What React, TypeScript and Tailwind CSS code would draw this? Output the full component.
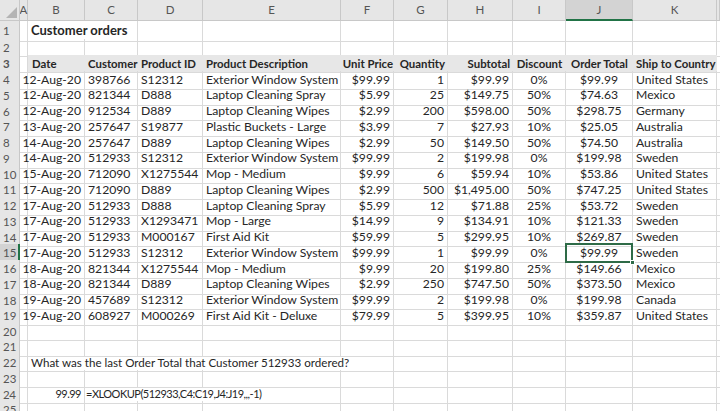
import React from "react";

const GRID =
  "grid grid-cols-[20px_8px_57px_53px_65px_138px_53px_54px_65px_53px_67px_84px_1fr]";

const rows = [
  ["12-Aug-20", "398766", "S12312", "Exterior Window System", "$99.99", "1", "$99.99", "0%", "$99.99", "United States"],
  ["12-Aug-20", "821344", "D888", "Laptop Cleaning Spray", "$5.99", "25", "$149.75", "50%", "$74.63", "Mexico"],
  ["12-Aug-20", "912534", "D889", "Laptop Cleaning Wipes", "$2.99", "200", "$598.00", "50%", "$298.75", "Germany"],
  ["13-Aug-20", "257647", "S19877", "Plastic Buckets - Large", "$3.99", "7", "$27.93", "10%", "$25.05", "Australia"],
  ["14-Aug-20", "257647", "D889", "Laptop Cleaning Wipes", "$2.99", "50", "$149.50", "50%", "$74.50", "Australia"],
  ["14-Aug-20", "512933", "S12312", "Exterior Window System", "$99.99", "2", "$199.98", "0%", "$199.98", "Sweden"],
  ["15-Aug-20", "712090", "X1275544", "Mop - Medium", "$9.99", "6", "$59.94", "10%", "$53.86", "United States"],
  ["17-Aug-20", "712090", "D889", "Laptop Cleaning Wipes", "$2.99", "500", "$1,495.00", "50%", "$747.25", "United States"],
  ["17-Aug-20", "512933", "D888", "Laptop Cleaning Spray", "$5.99", "12", "$71.88", "25%", "$53.72", "Sweden"],
  ["17-Aug-20", "512933", "X1293471", "Mop - Large", "$14.99", "9", "$134.91", "10%", "$121.33", "Sweden"],
  ["17-Aug-20", "512933", "M000167", "First Aid Kit", "$59.99", "5", "$299.95", "10%", "$269.87", "Sweden"],
  ["17-Aug-20", "512933", "S12312", "Exterior Window System", "$99.99", "1", "$99.99", "0%", "$99.99", "Sweden"],
  ["18-Aug-20", "821344", "X1275544", "Mop - Medium", "$9.99", "20", "$199.80", "25%", "$149.66", "Mexico"],
  ["18-Aug-20", "821344", "D889", "Laptop Cleaning Wipes", "$2.99", "250", "$747.50", "50%", "$373.50", "Mexico"],
  ["19-Aug-20", "457689", "S12312", "Exterior Window System", "$99.99", "2", "$199.98", "0%", "$199.98", "Canada"],
  ["19-Aug-20", "608927", "M000269", "First Aid Kit - Deluxe", "$79.99", "5", "$399.95", "10%", "$359.87", "United States"],
];

// B..K alignment for data rows
const align = ["r", "l", "l", "l", "r", "r", "r", "c", "c", "l"];

const alignCls: Record<string, string> = {
  l: "justify-start pl-[3px]",
  r: "justify-end pr-[3px]",
  c: "justify-center",
};

function Cell({
  children,
  a = "l",
  className = "",
}: {
  children?: React.ReactNode;
  a?: string;
  className?: string;
}) {
  return (
    <div
      className={`flex items-center whitespace-nowrap overflow-visible border-r border-b border-[#dadada] ${alignCls[a]} ${className}`}
    >
      {children}
    </div>
  );
}

function RowNum({ n, selected }: { n: number; selected?: boolean }) {
  return (
    <div
      className={`flex items-center pl-[3px] text-[11.5px] text-[#555] border-b border-[#c8c8c8] ${
        selected
          ? "bg-[#d3d3d3] border-r-2 border-r-[#217346]"
          : "bg-[#e6e6e6] border-r border-r-[#c8c8c8]"
      }`}
    >
      {n}
    </div>
  );
}

function Blank({ n }: { n: number }) {
  return (
    <>
      {Array.from({ length: n }).map((_, i) => (
        <Cell key={i} />
      ))}
    </>
  );
}

export default function App() {
  const letters = ["A", "B", "C", "D", "E", "F", "G", "H", "I", "J", "K", ""];

  return (
    <div
      className="w-[720px] h-[411px] overflow-hidden bg-white text-[#262626] text-[12.2px]"
      style={{ fontFamily: "Lato, 'Liberation Sans', sans-serif" }}
    >
      {/* column headers */}
      <div className={`${GRID} h-[21px]`}>
        <div className="relative bg-[#e6e6e6] border-r border-b border-[#c8c8c8]">
          <svg className="absolute right-[2px] bottom-[2px]" width="11" height="11" viewBox="0 0 11 11">
            <polygon points="11,0 11,11 0,11" fill="#b4b4b4" />
          </svg>
        </div>
        {letters.map((l, i) => (
          <div
            key={i}
            className={`flex items-center justify-center text-[11.5px] text-[#555] border-r border-[#c8c8c8] ${
              l === "J"
                ? "bg-[#d3d3d3] border-b-2 border-b-[#217346]"
                : "bg-[#e6e6e6] border-b border-b-[#c8c8c8]"
            }`}
          >
            {l}
          </div>
        ))}
      </div>

      {/* row 1 */}
      <div className={`${GRID} h-[18px]`}>
        <RowNum n={1} />
        <Cell />
        <Cell className="col-span-2 font-bold text-[13px]">Customer orders</Cell>
        <Blank n={9} />
      </div>

      {/* row 2 */}
      <div className={`${GRID} h-[15.75px]`}>
        <RowNum n={2} />
        <Blank n={12} />
      </div>

      {/* row 3 headers */}
      <div className={`${GRID} h-[15.75px] font-bold text-[11.4px]`}>
        <RowNum n={3} />
        <Cell />
        <div className="col-span-10 grid grid-cols-[57px_53px_65px_138px_53px_54px_65px_53px_67px_84px] bg-[#e7e7e7] border-b border-[#dadada] whitespace-nowrap">
          <div className="flex items-center pl-[4px]">Date</div>
          <div className="flex items-center pl-[3px]">Customer</div>
          <div className="flex items-center pl-[3px]">Product ID</div>
          <div className="flex items-center pl-[3px]">Product Description</div>
          <div className="flex items-center justify-end pr-[1px]">Unit Price</div>
          <div className="flex items-center justify-end pr-[3px]">Quantity</div>
          <div className="flex items-center justify-end pr-[3px]">Subtotal</div>
          <div className="flex items-center justify-center">Discount</div>
          <div className="flex items-center justify-center">Order Total</div>
          <div className="flex items-center pl-[3px]">Ship to Country</div>
        </div>
        <Cell />
      </div>

      {/* data rows */}
      {rows.map((r, i) => {
        const n = i + 4;
        return (
          <div key={n} className={`${GRID} h-[15.75px]`}>
            <RowNum n={n} selected={n === 15} />
            <Cell />
            {r.map((v, j) =>
              n === 15 && j === 8 ? (
                <div key={j} className="relative flex items-center justify-center border-b border-r border-[#dadada]">
                  <div className="absolute -left-[1px] -top-[1px] -right-[1px] -bottom-[1px] border-2 border-[#2e6b47]" />
                  <div className="absolute -right-[3px] -bottom-[3px] w-[5px] h-[5px] bg-[#2e6b47] border border-white" />
                  {v}
                </div>
              ) : (
                <Cell key={j} a={align[j]}>
                  {v}
                </Cell>
              )
            )}
            <Cell />
          </div>
        );
      })}

      {/* rows 20, 21 */}
      {[20, 21].map((n) => (
        <div key={n} className={`${GRID} h-[15.75px]`}>
          <RowNum n={n} />
          <Blank n={12} />
        </div>
      ))}

      {/* row 22 */}
      <div className={`${GRID} h-[15.75px]`}>
        <RowNum n={22} />
        <Cell />
        <Cell className="col-span-5 text-[11.6px]">What was the last Order Total that Customer 512933 ordered?</Cell>
        <Blank n={6} />
      </div>

      {/* row 23 */}
      <div className={`${GRID} h-[15.75px]`}>
        <RowNum n={23} />
        <Blank n={12} />
      </div>

      {/* row 24 */}
      <div className={`${GRID} h-[15.75px] text-[11px] tracking-[-0.5px]`}>
        <RowNum n={24} />
        <Cell />
        <Cell a="r">99.99</Cell>
        <Cell className="col-span-3 !pl-[1px]">=XLOOKUP(512933,C4:C19,J4:J19,,,-1)</Cell>
        <Blank n={7} />
      </div>

      {/* row 25 */}
      <div className={`${GRID} h-[15.75px]`}>
        <RowNum n={25} />
        <Blank n={12} />
      </div>
    </div>
  );
}
